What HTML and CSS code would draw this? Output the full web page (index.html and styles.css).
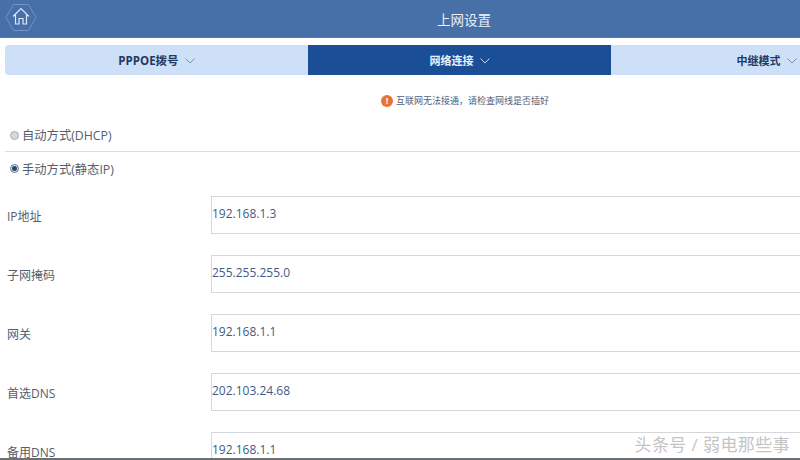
FILE: index.html
```html
<!DOCTYPE html>
<html lang="zh-CN">
<head>
<meta charset="utf-8">
<title>上网设置</title>
<link rel="stylesheet" href="styles.css">
</head>
<body>
<div class="page">
  <header class="topbar">
    <a class="home" aria-label="首页">
      <svg viewBox="0 0 32 28" width="32" height="28" fill="none">
        <path d="M8.5 1.5H23.5L31 14.5L23.5 27.5H8.5L1 14.5Z" stroke="#6f94c6" stroke-width="1"/>
        <path d="M8 13.5L16 5.5L24 13.5M10.5 11.5V21H14V15.5H18V21H21.5V11.5" stroke="#dbe6f5" stroke-width="1.2"/>
      </svg>
    </a>
    <h1 class="title">上网设置</h1>
  </header>

  <nav class="tabs">
    <div class="tab tab-first"><span>PPPOE拨号</span><svg class="chev" viewBox="0 0 10 6" width="10" height="6"><path d="M.5.5L5 5L9.5.5" fill="none" stroke="#7f93ad"/></svg></div>
    <div class="tab tab-active"><span>网络连接</span><svg class="chev" viewBox="0 0 10 6" width="10" height="6"><path d="M.5.5L5 5L9.5.5" fill="none" stroke="#c6d6ea"/></svg></div>
    <div class="tab tab-last"><span>中继模式</span><svg class="chev" viewBox="0 0 10 6" width="10" height="6"><path d="M.5.5L5 5L9.5.5" fill="none" stroke="#7f93ad"/></svg></div>
  </nav>

  <p class="notice"><span class="notice-icon">!</span>互联网无法接通，请检查网线是否插好</p>

  <div class="mode mode-auto"><span class="radio"></span>自动方式(DHCP)</div>
  <div class="mode mode-manual"><span class="radio radio-on"></span>手动方式(静态IP)</div>

  <form class="fields">
    <div class="field"><label>IP地址</label><div class="input">192.168.1.3</div></div>
    <div class="field"><label>子网掩码</label><div class="input">255.255.255.0</div></div>
    <div class="field"><label>网关</label><div class="input">192.168.1.1</div></div>
    <div class="field"><label>首选DNS</label><div class="input">202.103.24.68</div></div>
    <div class="field"><label>备用DNS</label><div class="input">192.168.1.1</div></div>
  </form>

  <div class="watermark">头条号 / 弱电那些事</div>
  <div class="edge"></div>
</div>
</body>
</html>
```

FILE: styles.css
```css
* { box-sizing: border-box; }
html, body { margin: 0; padding: 0; }
body { width: 800px; height: 460px; overflow: hidden; background: #fff; }
.page {
  position: relative;
  width: 800px;
  height: 460px;
  overflow: hidden;
  font-family: "Open Sans", "Noto Sans CJK SC", sans-serif;
  color: #4b5563;
  font-size: 12px;
}
.topbar {
  position: relative;
  height: 38px;
  padding-left: 128px;
  background: #4870a8;
  display: flex;
  align-items: center;
  justify-content: center;
  border-bottom: 1px solid #5c7ba6;
}
.home { position: absolute; left: 5px; top: 3px; width: 32px; height: 28px; display: block; }
.home svg { display: block; }
.title { margin: 0; font-size: 13.5px; font-weight: 400; color: #e9eff8; }
.tabs { display: flex; width: 912px; margin: 7px 0 0 5px; height: 30px; }
.tab {
  flex: 0 0 303px;
  display: flex;
  align-items: center;
  justify-content: center;
  gap: 6px;
  background: #cde0f7;
  color: #1f3a63;
  font-weight: 700;
  font-size: 11px;
}
.tab-first { border-radius: 4px 0 0 4px; font-size: 11.5px; }
.tab-active { background: #1a4e96; color: #e8f0fb; }
.tab-last { padding-left: 8px; }
.chev { display: block; margin-top: 2px; }
.notice {
  margin: 18px 0 0;
  padding-left: 381px;
  height: 15px;
  display: flex;
  align-items: center;
  font-size: 9px;
  color: #50607a;
}
.notice-icon {
  width: 12px;
  height: 12px;
  border-radius: 50%;
  background: #ea7332;
  color: #fff;
  font-size: 9px;
  font-weight: 700;
  line-height: 12px;
  text-align: center;
  margin-right: 3px;
}
.mode {
  display: flex;
  align-items: center;
  gap: 3px;
  padding-left: 10px;
  font-size: 12.3px;
  color: #555e6c;
}
.mode-auto {
  margin: 14px 0 0 5px;
  padding-left: 5px;
  height: 30px;
  padding-bottom: 3px;
  border-bottom: 1px solid #d6dee6;
}
.mode-manual { height: 34px; padding-bottom: 1px; }
.radio {
  width: 9px;
  height: 9px;
  border-radius: 50%;
  border: 1px solid #a9adb3;
  background: #d7d9dc;
}
.radio-on { background: #27456f; box-shadow: inset 0 0 0 1px #dfe6ee; border-color: #8d9aaa; }
.fields { margin-top: 10px; }
.field { display: flex; align-items: center; height: 38px; margin-bottom: 21px; }
.field label { flex: 0 0 211px; padding: 2px 0 0 7px; font-size: 12px; color: #555e6c; }
.input {
  flex: 0 0 620px;
  height: 38px;
  line-height: 34px;
  border: 1px solid #d4d8dc;
  color: #3f5a85;
  font-size: 12px;
}
.watermark {
  position: absolute;
  right: 10px;
  bottom: 4px;
  font-size: 17px;
  letter-spacing: .4px;
  color: #c4c4c4;
}
.edge { position: absolute; left: 0; right: 0; bottom: 0; height: 2px; background: #6d7073; }
```
